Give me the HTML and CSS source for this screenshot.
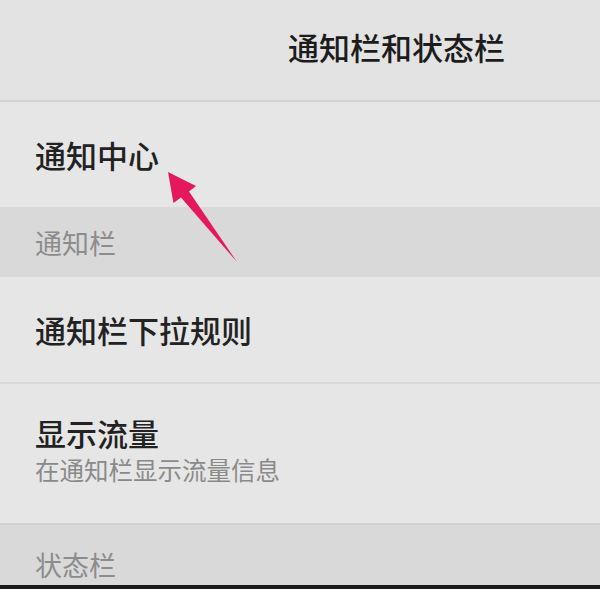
FILE: index.html
```html
<!DOCTYPE html>
<html lang="zh-CN">
<head>
    <meta charset="UTF-8">
    <meta name="viewport" content="width=device-width, initial-scale=1.0">
    <title>通知栏和状态栏</title>
    <link rel="stylesheet" href="styles.css">
</head>
<body>
    <div class="screen">
        <!-- Cabecera -->
        <header class="top-bar">
            <h1>通知栏和状态栏</h1>
        </header>

        <div class="item item-single">
            <span class="item-title">通知中心</span>
        </div>

        <div class="section">通知栏</div>

        <div class="item item-single">
            <span class="item-title">通知栏下拉规则</span>
        </div>

        <div class="item item-double">
            <span class="item-title">显示流量</span>
            <span class="item-sub">在通知栏显示流量信息</span>
        </div>

        <div class="section section-last">状态栏</div>

        <div class="bottom-edge"></div>

        <!-- Flecha de anotación -->
        <svg class="arrow" width="600" height="589" viewBox="0 0 600 589">
            <polygon points="168,172 196,186 189,191.5 237,262 181,197.5 173.5,203" fill="#e5185d"/>
        </svg>
    </div>
</body>
</html>
```

FILE: styles.css
```css
* {
    margin: 0;
    padding: 0;
    box-sizing: border-box;
}

body {
    background: #e5e5e5;
    font-family: "Noto Sans CJK SC", "Noto Sans", sans-serif;
}

.screen {
    position: relative;
    width: 600px;
    height: 589px;
    overflow: hidden;
    display: flex;
    flex-direction: column;
}

/* Cabecera */
.top-bar {
    height: 102px;
    flex-shrink: 0;
    display: flex;
    align-items: center;
    padding-left: 288px;
    padding-bottom: 8px;
    background: #e3e3e3;
    border-bottom: 2px solid #d3d3d3;
}

.top-bar h1 {
    font-size: 31px;
    font-weight: 500;
    color: #1c1c1c;
}

/* Filas */
.item {
    display: flex;
    flex-direction: column;
    justify-content: center;
    padding-left: 35px;
    background: #e6e6e6;
    flex-shrink: 0;
}

.item-single {
    height: 105px;
}

.item + .item {
    border-top: 2px solid #d8d8d8;
}

.item-double {
    height: 141px;
    padding-bottom: 8px;
}

.item-title {
    font-size: 31px;
    font-weight: 500;
    color: #222;
    line-height: 40px;
}

.item-sub {
    font-size: 24.5px;
    color: #8a8a8a;
    line-height: 34px;
}

/* Secciones */
.section {
    height: 70px;
    flex-shrink: 0;
    display: flex;
    align-items: center;
    padding-left: 35px;
    background: #d9d9d9;
    font-size: 27px;
    color: #8c8c8c;
}

.section-last {
    height: 62px;
    border-top: 2px solid #d1d1d1;
    padding-top: 18px;
}

.bottom-edge {
    flex: 1;
    background: #1a1a1a;
}

.arrow {
    position: absolute;
    top: 0;
    left: 0;
    pointer-events: none;
}
```
